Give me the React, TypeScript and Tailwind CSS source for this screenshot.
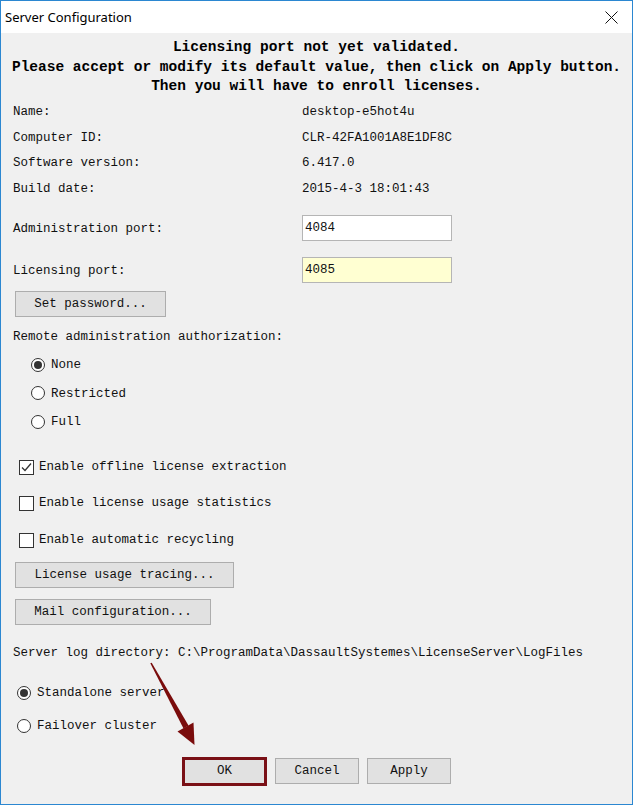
import { useState } from "react";

// Windows-style "Server Configuration" dialog for the license server.

const mono = "font-['Liberation_Mono','DejaVu_Sans_Mono',monospace] text-[12.5px] text-[#111]";

function Radio({ checked, label, onClick }: { checked: boolean; label: string; onClick: () => void }) {
  return (
    <button onClick={onClick} className="flex items-center gap-[6px]">
      <span className="flex h-[14px] w-[14px] items-center justify-center rounded-full border border-[#333] bg-white">
        {checked && <span className="h-[8px] w-[8px] rounded-full bg-[#333]" />}
      </span>
      <span className="pt-[2px]">{label}</span>
    </button>
  );
}

function Check({ checked, label, onClick }: { checked: boolean; label: string; onClick: () => void }) {
  return (
    <button onClick={onClick} className="flex items-center gap-[5px]">
      <span className="flex h-[15px] w-[15px] items-center justify-center border border-[#333] bg-white">
        {checked && (
          <svg width={11} height={11} viewBox="0 0 11 11" fill="none" stroke="#333" strokeWidth={1.3} aria-hidden>
            <path d="M1 5.5l3 3 6-7" />
          </svg>
        )}
      </span>
      <span>{label}</span>
    </button>
  );
}

function WinButton({ children, className = "" }: { children: React.ReactNode; className?: string }) {
  return (
    <button className={`flex h-[26px] items-center justify-center border border-[#adadad] bg-[#e1e1e1] ${className}`}>
      {children}
    </button>
  );
}

const info = [
  ["Name:", "desktop-e5hot4u"],
  ["Computer ID:", "CLR-42FA1001A8E1DF8C"],
  ["Software version:", "6.417.0"],
  ["Build date:", "2015-4-3 18:01:43"],
];

export default function App() {
  const [auth, setAuth] = useState("None");
  const [mode, setMode] = useState("Standalone server");
  const [opts, setOpts] = useState([true, false, false]);
  const [adminPort, setAdminPort] = useState("4084");
  const [licPort, setLicPort] = useState("4085");

  const toggle = (i: number) => setOpts(opts.map((v, j) => (j === i ? !v : v)));

  return (
    <div className="relative h-[805px] w-[633px] overflow-hidden border border-[#2b87d1] bg-[#f0f0f0]">
      {/* title bar */}
      <div className="flex h-[32px] items-center justify-between bg-white pl-[4px] pr-[14px] pt-[1px]">
        <span className="font-['Noto_Sans',sans-serif] text-[13px] text-black">Server Configuration</span>
        <svg width={13} height={13} viewBox="0 0 13 13" stroke="#111" strokeWidth={1} aria-hidden>
          <path d="M0.5 0.5l12 12M12.5 0.5l-12 12" />
        </svg>
      </div>

      <div className="pt-[5px] text-center font-['Liberation_Mono',monospace] text-[14.5px] font-bold leading-[19.5px] text-black">
        <p>Licensing port not yet validated.</p>
        <p>Please accept or modify its default value, then click on Apply button.</p>
        <p>Then you will have to enroll licenses.</p>
      </div>

      <div className={`${mono} pl-[12px]`}>
        <div className="mt-[3px]">
          {info.map(([k, v]) => (
            <div key={k} className="flex h-[25.7px] items-center">
              <span className="w-[289px]">{k}</span>
              <span>{v}</span>
            </div>
          ))}
        </div>

        <div className="mt-[13px] flex h-[26px] items-center">
          <span className="w-[289px] pt-[2px]">Administration port:</span>
          <input
            value={adminPort}
            onChange={(e) => setAdminPort(e.target.value)}
            className="h-[26px] w-[150px] border border-[#b5b5b5] bg-white px-[2px] outline-none"
          />
        </div>
        <div className="mt-[16px] flex h-[26px] items-center">
          <span className="w-[289px] pt-[2px]">Licensing port:</span>
          <input
            value={licPort}
            onChange={(e) => setLicPort(e.target.value)}
            className="h-[26px] w-[150px] border border-[#b5b5b5] bg-[#ffffd2] px-[2px] outline-none"
          />
        </div>

        <WinButton className="ml-[2px] mt-[8px] w-[151px]">Set password...</WinButton>

        <div className="mt-[9px] flex h-[20px] items-center pt-[2px]">Remote administration authorization:</div>
        <div className="mt-[4px] pl-[18px]">
          {["None", "Restricted", "Full"].map((r) => (
            <div key={r} className="flex h-[28.5px] items-center">
              <Radio checked={auth === r} label={r} onClick={() => setAuth(r)} />
            </div>
          ))}
        </div>

        <div className="mt-[13px] pl-[6px]">
          {["Enable offline license extraction", "Enable license usage statistics", "Enable automatic recycling"].map((c, i) => (
            <div key={c} className="flex h-[36.5px] items-center">
              <Check checked={opts[i]} label={c} onClick={() => toggle(i)} />
            </div>
          ))}
        </div>

        <WinButton className="ml-[2px] mt-[4px] w-[219px]">License usage tracing...</WinButton>
        <WinButton className="ml-[2px] mt-[11px] w-[196px]">Mail configuration...</WinButton>

        <div className="mt-[17px] flex h-[20px] items-center pt-[2px]">
          Server log directory: C:\ProgramData\DassaultSystemes\LicenseServer\LogFiles
        </div>

        <div className="mt-[14px] pl-[4px]">
          {["Standalone server", "Failover cluster"].map((m) => (
            <div key={m} className="flex h-[33px] items-center">
              <Radio checked={mode === m} label={m} onClick={() => setMode(m)} />
            </div>
          ))}
        </div>
      </div>

      <div className={`${mono} mt-[15px] flex justify-center gap-[8px]`}>
        <button className="flex h-[29px] w-[85px] items-center justify-center border-[3px] border-[#7a1016] bg-[#e1e1e1]">
          OK
        </button>
        <WinButton className="mt-[1px] w-[84px]">Cancel</WinButton>
        <WinButton className="mt-[1px] w-[84px]">Apply</WinButton>
      </div>

      {/* annotation arrow pointing at OK */}
      <svg className="pointer-events-none absolute left-0 top-0" width={633} height={805} aria-hidden>
        <polygon points="149.3,662.3 150.7,661.7 187.5,724.6 182.5,727.4" fill="#7a0c0c" />
        <polygon points="176.5,730.5 192.5,721.5 193.5,744" fill="#7a0c0c" />
      </svg>
    </div>
  );
}
